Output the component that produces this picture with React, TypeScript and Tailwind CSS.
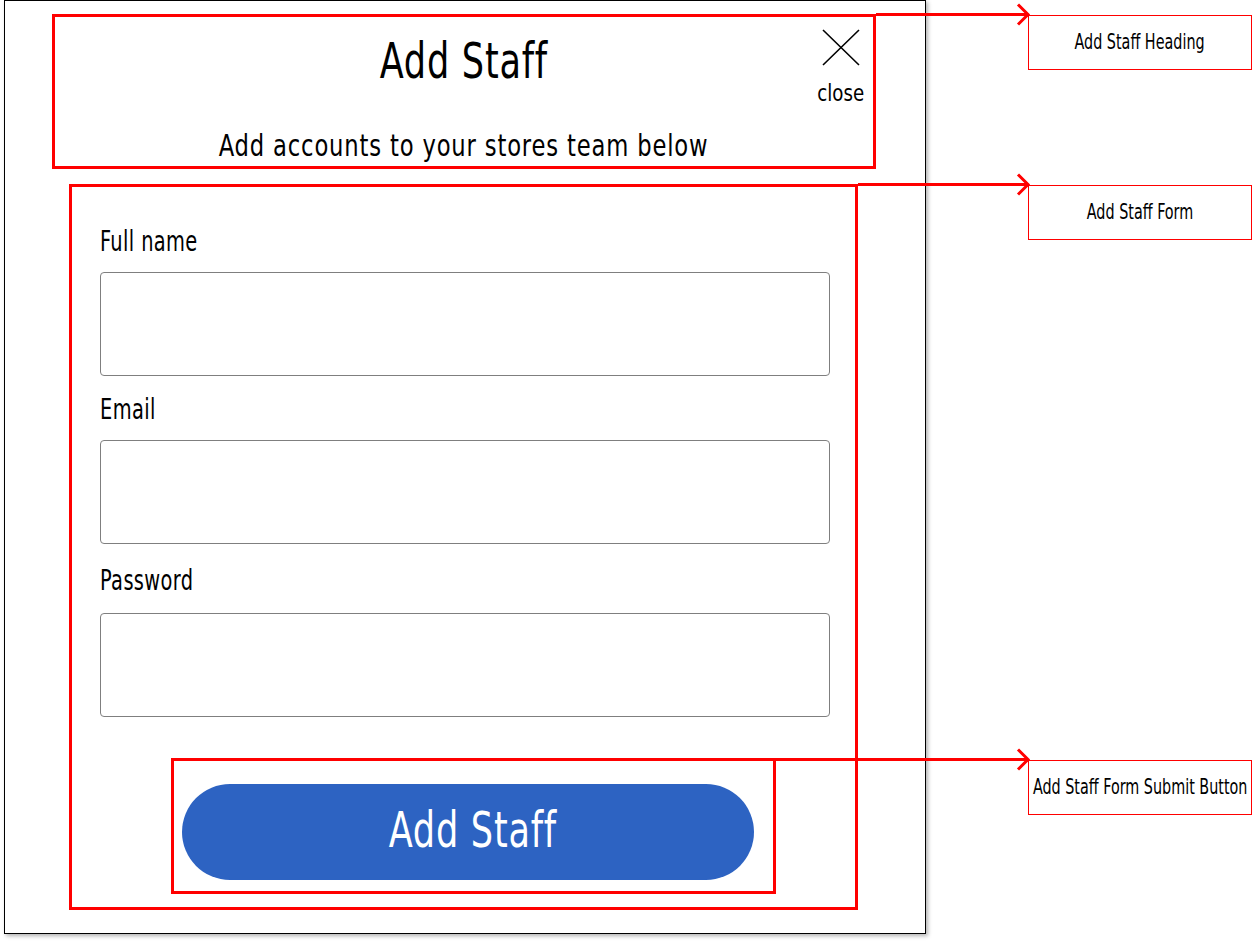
import React from "react";

const FONT = { fontFamily: '"DejaVu Sans Condensed", "DejaVu Sans", sans-serif' };

function Field({ label, mt, gap }: { label: string; mt: string; gap: string }) {
  return (
    <div className={`flex flex-col items-start ${mt}`}>
      <span className="inline-block origin-left scale-x-[0.77] whitespace-nowrap text-[28px] leading-[28px] tracking-[0.5px] text-black">
        {label}
      </span>
      <div className={`${gap} h-[104px] w-[730px] rounded-[4px] border border-[#7f7f7f] bg-white`} />
    </div>
  );
}

function Callout({ top, label }: { top: string; label: string }) {
  return (
    <div
      className={`absolute left-[1028px] ${top} flex h-[55px] w-[224px] items-center justify-center border border-[#ff0000] bg-white`}
    >
      <span className="inline-block scale-x-[0.76] whitespace-nowrap text-[21px] leading-[21px] text-black">{label}</span>
    </div>
  );
}

export default function App() {
  return (
    <div className="relative h-[941px] w-[1252px] overflow-hidden bg-white" style={FONT}>
      {/* wireframe frame */}
      <div className="ml-[4px] h-[934px] w-[922px] border border-black bg-white shadow-[2px_2px_4px_rgba(0,0,0,0.3)]">
        {/* heading section */}
        <div className="relative ml-[47px] mt-[13px] flex h-[155px] w-[824px] flex-col items-center border-[3px] border-[#ff0000]">
          <span className="mt-[19px] inline-block scale-x-[0.78] whitespace-nowrap text-[50px] leading-[50px] tracking-[1px] text-black">
            Add Staff
          </span>
          <span className="mt-[45px] inline-block scale-x-[0.84] whitespace-nowrap text-[30px] leading-[30px] tracking-[1px] text-black">
            Add accounts to your stores team below
          </span>
          <button className="absolute left-[761px] top-[12px] flex w-[50px] flex-col items-center">
            <svg width="38" height="37" viewBox="0 0 38 37" fill="none" stroke="black" strokeWidth="1.6">
              <path d="M1 1 L37 36 M37 1 L1 36" />
            </svg>
            <span className="mt-[16px] inline-block scale-x-[0.88] text-[23px] leading-[23px] text-black">close</span>
          </button>
        </div>

        {/* form section */}
        <div className="ml-[64px] mt-[15px] h-[726px] w-[789px] border-[3px] border-[#ff0000] pl-[28px] pt-[41px]">
          <Field label="Full name" mt="mt-0" gap="mt-[16px]" />
          <Field label="Email" mt="mt-[20px]" gap="mt-[16px]" />
          <Field label="Password" mt="mt-[23px]" gap="mt-[18px]" />
          <div className="ml-[71px] mt-[41px] h-[136px] w-[605px] border-[3px] border-[#ff0000] pl-[8px] pt-[23px]">
            <button className="flex h-[96px] w-[572px] items-center justify-center rounded-full bg-[#2d63c2] pb-[4px] pl-[10px]">
              <span className="inline-block scale-x-[0.78] whitespace-nowrap text-[50px] leading-[50px] tracking-[1px] text-white">
                Add Staff
              </span>
            </button>
          </div>
        </div>
      </div>

      {/* annotation arrows */}
      <svg className="absolute left-0 top-0" width="1252" height="941" fill="none" stroke="#ff0000" strokeWidth="3">
        <path d="M876 14.5 H1028 M1018 4.5 L1028 14.5 L1018 24.5" />
        <path d="M858 184.5 H1028 M1018 174.5 L1028 184.5 L1018 194.5" />
        <path d="M776 759.5 H1028 M1018 749.5 L1028 759.5 L1018 769.5" />
      </svg>

      <Callout top="top-[15px]" label="Add Staff Heading" />
      <Callout top="top-[185px]" label="Add Staff Form" />
      <Callout top="top-[760px]" label="Add Staff Form Submit Button" />
    </div>
  );
}
